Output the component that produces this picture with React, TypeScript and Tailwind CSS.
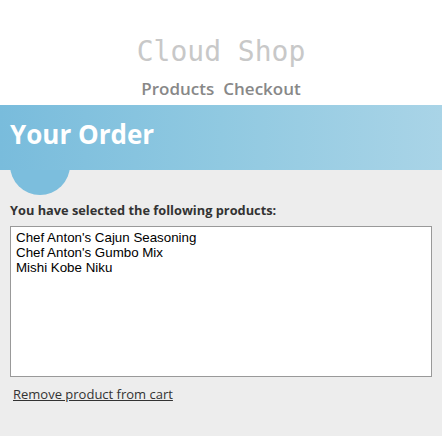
const products = [
  "Chef Anton's Cajun Seasoning",
  "Chef Anton's Gumbo Mix",
  "Mishi Kobe Niku",
];

const App = () => {
  return (
    <div className="min-h-[436px] flex flex-col bg-white font-['Open_Sans',sans-serif]">
      {/* header */}
      <div className="flex flex-col items-center pt-[36px] pb-[4px]">
        <h1 className="font-['DejaVu_Sans_Mono',monospace] text-[28px] leading-[32px] text-[#c8c8c8]">
          Cloud Shop
        </h1>
        <nav className="mt-[9px] flex gap-[9px] text-[17px] leading-[24px] font-semibold text-[#888888]">
          <a href="#">Products</a>
          <a href="#">Checkout</a>
        </nav>
      </div>

      {/* banner */}
      <div className="relative">
        <div className="absolute left-[10px] top-[30px] w-[60px] h-[60px] rounded-full bg-[#7cbedd]" />
        <div className="relative z-10 h-[65px] px-[10px] pt-[12px] bg-gradient-to-r from-[#79bcdc] via-[#90c9e1] to-[#a9d4e7]">
          <h2 className="text-[26px] leading-[34px] font-bold text-white">Your Order</h2>
        </div>
      </div>

      {/* content */}
      <div className="flex-1 bg-[#ededed] pt-[31px] pb-[30px]">
        <p className="px-[10px] text-[12.8px] leading-[18px] font-bold text-[#333333]">
          You have selected the following products:
        </p>
        <div className="mx-[10px] mt-[7px] h-[151px] border border-[#999999] bg-white px-[5px] pt-[3px] font-['Liberation_Sans',Arial,sans-serif] text-[13.33px] leading-[15px] text-black">
          {products.map((p) => (
            <div key={p}>{p}</div>
          ))}
        </div>
        <a
          href="#"
          className="mt-[8px] ml-[13px] inline-block text-[13px] leading-[18px] text-[#333333] underline"
        >
          Remove product from cart
        </a>
      </div>
    </div>
  );
};

export default App;
